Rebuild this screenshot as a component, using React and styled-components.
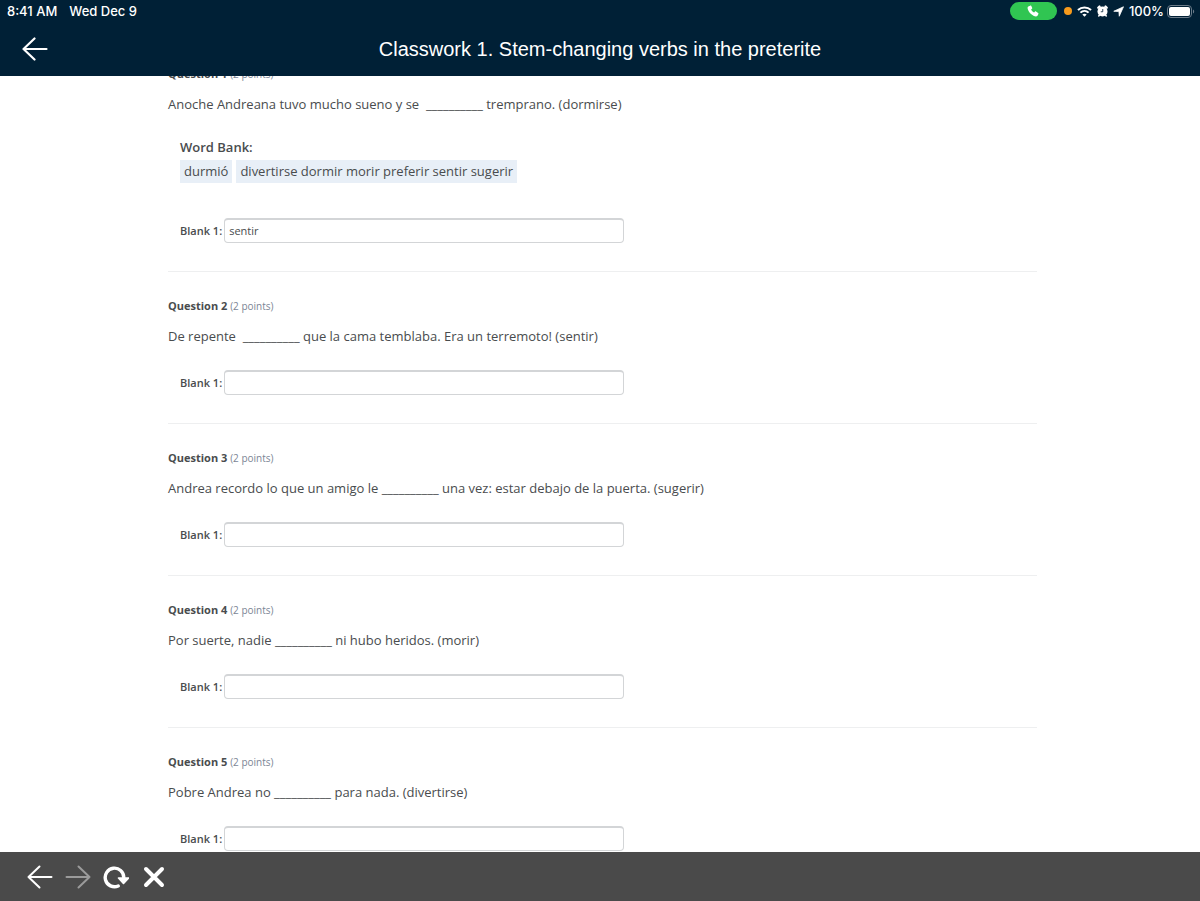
import React, { useLayoutEffect, useRef } from 'react'
import styled, { createGlobalStyle } from 'styled-components'

const color = {
  navy: '#002036',
  bar: '#4a4a4a',
  text: '#494c4e',
  muted: '#7c8695',
  line: '#eeeff0',
  chip: '#e8eff7',
  white: '#ffffff',
}

const GlobalStyle = createGlobalStyle`
  * {
    box-sizing: border-box;
  }

  body {
    margin: 0;
    background: ${color.white};
    color: ${color.text};
    font-family: 'Open Sans', 'Noto Sans', sans-serif;
  }
`

const Screen = styled.div`
  display: flex;
  flex-direction: column;
  height: 100vh;
`

const Header = styled.header`
  flex: none;
  background: ${color.navy};
  color: ${color.white};
`

const StatusBar = styled.div`
  display: flex;
  align-items: center;
  justify-content: space-between;
  height: 22px;
  padding: 0 5px 0 7px;
  font-family: Inter, 'Liberation Sans', sans-serif;
  font-size: 13px;
  font-weight: 500;
`

const StatusGroup = styled.div`
  display: flex;
  align-items: center;
  gap: ${(props) => props.$gap}px;
`

const CallPill = styled.span`
  display: flex;
  align-items: center;
  justify-content: center;
  width: 47px;
  height: 18px;
  margin-right: 2px;
  border-radius: 9px;
  background: #30c552;
`

const Dot = styled.span`
  width: 8px;
  height: 8px;
  border-radius: 50%;
  background: #f79a1c;
`

const TitleBar = styled.div`
  display: grid;
  grid-template-columns: 48px 1fr 48px;
  align-items: center;
  height: 54px;
  padding: 0 11px;
`

const Title = styled.h1`
  margin: 0;
  font-family: 'Liberation Sans', Arial, sans-serif;
  font-size: 20px;
  font-weight: 400;
  line-height: 24px;
  text-align: center;
`

const IconButton = styled.button`
  display: flex;
  align-items: center;
  justify-content: center;
  width: ${(props) => props.$width || 38}px;
  height: 40px;
  padding: 0;
  border: 0;
  background: none;
  color: ${color.white};

  &:disabled {
    color: #9b9b9b;
  }
`

const Main = styled.main`
  flex: 1;
  min-height: 0;
  overflow-y: auto;
  padding: 0 163px 0 168px;
  scrollbar-width: none;
`

const Question = styled.section`
  padding: 24px 0 28px;
  border-bottom: 1px solid ${color.line};
`

const Heading = styled.h2`
  margin: 0 0 10px;
  font-size: 11px;
  font-weight: 700;
  line-height: 20px;
`

const Points = styled.span`
  color: ${color.muted};
  font-size: 10px;
  font-weight: 400;
`

const Sentence = styled.p`
  margin: 0;
  font-size: 13px;
  line-height: 20px;
  white-space: pre-wrap;
`

const WordBank = styled.div`
  margin: 23px 12px 0;
  padding-bottom: 11px;
  font-size: 13px;
`

const BankLabel = styled.div`
  margin-bottom: 3px;
  font-weight: 600;
  line-height: 20px;
`

const Words = styled.div`
  display: flex;
  gap: 4px;
`

const Word = styled.span`
  padding: 0 4px;
  background: ${color.chip};
  line-height: 23px;
`

const Answer = styled.div`
  display: flex;
  align-items: center;
  gap: 2px;
  margin: 24px 12px 0;
`

const Label = styled.label`
  flex: none;
  font-size: 11px;
  font-weight: 600;
`

const Input = styled.input`
  width: 400px;
  height: 25px;
  padding: 0 4px 1px;
  border: 1px solid #d3d5d7;
  border-top: 2px solid #d3d5d7;
  border-radius: 4px;
  background: ${color.white};
  color: ${color.text};
  font-family: inherit;
  font-size: 11px;
  outline: none;
`

const Toolbar = styled.footer`
  display: flex;
  flex: none;
  align-items: center;
  height: 49px;
  padding: 0 21px;
  background: ${color.bar};
`

const Arrow = ({ right, weight }) => (
  <svg
    width="26"
    height="24"
    viewBox="0 0 26 24"
    fill="none"
    stroke="currentColor"
    strokeWidth={weight}
    strokeLinecap="round"
    strokeLinejoin="round"
  >
    <path d={right ? 'M1.5 12H24.5M13.5 1.5L24.5 12L13.5 22.5' : 'M24.5 12H1.5M12.5 1.5L1.5 12L12.5 22.5'} />
  </svg>
)

const PhoneIcon = () => (
  <svg width="12" height="12" viewBox="0 0 24 24" fill="#fff">
    <path d="M6.2 1.4 2.6 3.2C.8 4.2.8 7 2.2 10.2c2.4 5.4 6.2 9.4 11.6 11.8 3.2 1.4 6 1.2 7.2-.6l1.8-3.2c.5-.9.2-1.8-.6-2.4l-4.2-2.8c-.8-.5-1.8-.3-2.4.4l-1.4 1.7c-2.8-1.3-4.7-3.3-6-6l1.7-1.4c.7-.6.9-1.6.4-2.4L8.6 2c-.5-.8-1.5-1.1-2.4-.6z" />
  </svg>
)

const WifiIcon = () => (
  <svg width="15" height="11" viewBox="0 0 28 21" fill="none" stroke="#fff" strokeWidth="3.8">
    <path d="M1.5 7.6C8.5 1 19.5 1 26.5 7.6M6.2 12.6c4.4-4.2 11.2-4.2 15.6 0" />
    <path d="M14 20.5 9.8 16.3c2.4-2.2 6-2.2 8.4 0z" fill="#fff" stroke="none" />
  </svg>
)

const AlarmIcon = () => (
  <svg width="11" height="12" viewBox="0 0 22 24">
    <g stroke="#fff" strokeLinecap="round">
      <path d="M2.5 5.500 5 3M19.500 5.500 17 3" strokeWidth="4.500" />
      <path d="M5 20l-1.500 2M17 20l1.500 2" strokeWidth="3" />
    </g>
    <circle cx="11" cy="13" r="10" fill="#fff" />
    <path d="M11.500 8V13.500H7.500" fill="none" stroke={color.navy} strokeWidth="1.600" />
  </svg>
)

const LocationIcon = () => (
  <svg width="11" height="11" viewBox="0 0 22 22" fill="#fff" stroke="#fff" strokeLinejoin="round">
    <path d="M21 1.5 12.5 20.5 11.8 11.2 1.5 10.5z" strokeWidth="1.5" />
  </svg>
)

const BatteryIcon = () => (
  <svg width="28" height="13" viewBox="0 0 28 13">
    <rect x=".5" y=".5" width="24" height="12" rx="3.5" fill="none" stroke="#6b7b89" />
    <rect x="2" y="2" width="21" height="9" rx="2" fill="#fff" />
    <path d="M26 4.5c1.6.5 1.6 3.5 0 4z" fill="#6b7b89" />
  </svg>
)

const ReloadIcon = () => (
  <svg width="26" height="24" viewBox="0 0 26 24">
    <path
      d="M15.2 21A9.3 9.3 0 1 1 20.8 12.500"
      fill="none"
      stroke="currentColor"
      strokeWidth="3.4"
      strokeLinecap="round"
    />
    <path
      d="M15.500 13h10L20.500 18.500z"
      fill="currentColor"
      stroke="currentColor"
      strokeWidth="1.6"
      strokeLinejoin="round"
    />
  </svg>
)

const CloseIcon = () => (
  <svg width="22" height="22" viewBox="0 0 22 22" stroke="currentColor" strokeWidth="4" strokeLinecap="round">
    <path d="M3 3l16 16M19 3L3 19" />
  </svg>
)

const questions = [
  {
    text: 'Anoche Andreana tuvo mucho sueno y se  __________ tremprano. (dormirse)',
    bank: ['durmió', 'divertirse dormir morir preferir sentir sugerir'],
    answer: 'sentir',
  },
  { text: 'De repente  __________ que la cama temblaba. Era un terremoto! (sentir)' },
  { text: 'Andrea recordo lo que un amigo le __________ una vez: estar debajo de la puerta. (sugerir)' },
  { text: 'Por suerte, nadie __________ ni hubo heridos. (morir)' },
  { text: 'Pobre Andrea no __________ para nada. (divertirse)' },
]

const QuestionItem = (props) => {
  const {
    number, text, bank, answer,
  } = props
  const id = `question-${number}-blank-1`

  return (
    <Question>
      <Heading>
        {`Question ${number} `}
        <Points>(2 points)</Points>
      </Heading>
      <Sentence>{text}</Sentence>
      {bank && (
        <WordBank>
          <BankLabel>Word Bank:</BankLabel>
          <Words>
            {bank.map((word) => <Word key={word}>{word}</Word>)}
          </Words>
        </WordBank>
      )}
      <Answer>
        <Label htmlFor={id}>Blank 1:</Label>
        <Input id={id} type="text" defaultValue={answer} />
      </Answer>
    </Question>
  )
}

const App = () => {
  const main = useRef(null)

  // open with the first question just under the title bar
  useLayoutEffect(() => {
    main.current.scrollTop = 36
  }, [])

  return (
    <Screen>
      <GlobalStyle />
      <Header>
        <StatusBar>
          <StatusGroup $gap={12}>
            <span>8:41 AM</span>
            <span>Wed Dec 9</span>
          </StatusGroup>
          <StatusGroup $gap={5}>
            <CallPill><PhoneIcon /></CallPill>
            <Dot />
            <WifiIcon />
            <AlarmIcon />
            <LocationIcon />
            <StatusGroup $gap={3}>
              <span>100%</span>
              <BatteryIcon />
            </StatusGroup>
          </StatusGroup>
        </StatusBar>
        <TitleBar>
          <IconButton type="button" $width={48} aria-label="Back"><Arrow weight="2.2" /></IconButton>
          <Title>Classwork 1. Stem-changing verbs in the preterite</Title>
        </TitleBar>
      </Header>
      <Main ref={main}>
        {questions.map((question, index) => (
          <QuestionItem key={question.text} number={index + 1} {...question} />
        ))}
      </Main>
      <Toolbar>
        <IconButton type="button" aria-label="Previous page"><Arrow weight="2" /></IconButton>
        <IconButton type="button" aria-label="Next page" disabled><Arrow right weight="2" /></IconButton>
        <IconButton type="button" aria-label="Reload"><ReloadIcon /></IconButton>
        <IconButton type="button" aria-label="Close"><CloseIcon /></IconButton>
      </Toolbar>
    </Screen>
  )
}

export default App
